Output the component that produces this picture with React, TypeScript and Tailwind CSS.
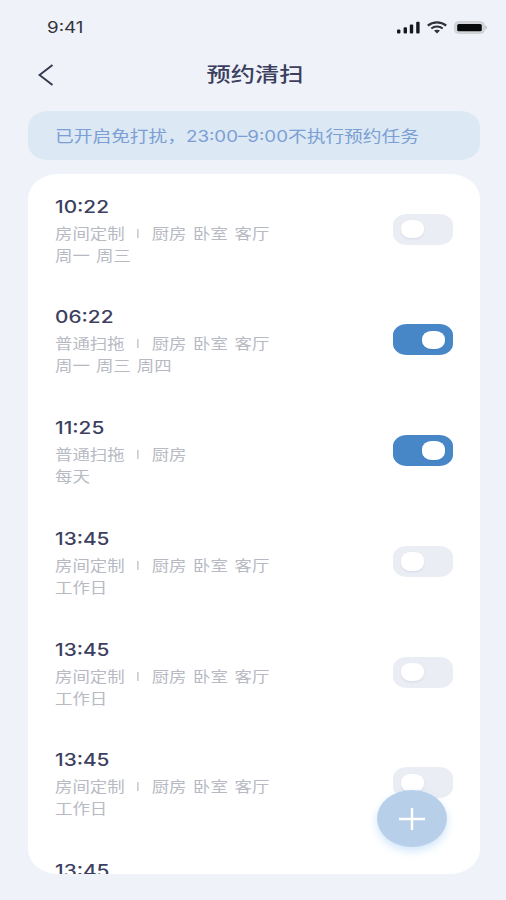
import { useState } from 'react'

type Schedule = {
  time: string
  mode: string
  rooms: string
  repeat: string
  enabled: boolean
}

const initialSchedules: Schedule[] = [
  { time: '10:22', mode: '房间定制', rooms: '厨房 卧室 客厅', repeat: '周一 周三', enabled: false },
  { time: '06:22', mode: '普通扫拖', rooms: '厨房 卧室 客厅', repeat: '周一 周三 周四', enabled: true },
  { time: '11:25', mode: '普通扫拖', rooms: '厨房', repeat: '每天', enabled: true },
  { time: '13:45', mode: '房间定制', rooms: '厨房 卧室 客厅', repeat: '工作日', enabled: false },
  { time: '13:45', mode: '房间定制', rooms: '厨房 卧室 客厅', repeat: '工作日', enabled: false },
  { time: '13:45', mode: '房间定制', rooms: '厨房 卧室 客厅', repeat: '工作日', enabled: false },
  { time: '13:45', mode: '房间定制', rooms: '厨房 卧室 客厅', repeat: '工作日', enabled: false }
]

function StatusBar() {
  return (
    <div className="flex h-[52px] items-center justify-between pl-[47px] pr-[18px] pt-0.5">
      <span className="origin-left scale-x-[1.21] pt-0.5 text-[15.5px] leading-none text-[#33353a]">
        9:41
      </span>
      <div className="flex items-center gap-[7px]">
        <svg width="24" height="13" viewBox="0 0 24 13" fill="#17181c">
          <rect x="1" y="8.5" width="3.4" height="4" rx="1" />
          <rect x="7.6" y="6.2" width="3.4" height="6.3" rx="1" />
          <rect x="13.8" y="3.5" width="3.4" height="9" rx="1" />
          <rect x="20.2" y="0.7" width="3.4" height="11.8" rx="1" />
        </svg>
        <svg width="20" height="13" viewBox="0 0 20 13" fill="none" stroke="#303238">
          <path d="M.8 4.6C6 .2 14 .2 19.2 4.6" strokeWidth="2.2" />
          <path d="M4.3 7.6c3.2-2.8 8.2-2.8 11.4 0" strokeWidth="2" />
          <path d="M7 9.6c1.8-1.3 4.2-1.3 6 0l-3 2.9z" fill="#303238" stroke="none" />
        </svg>
        <svg width="34" height="13" viewBox="0 0 34 13">
          <rect x="0.7" y="0.7" width="29.6" height="11.6" rx="3.6" fill="#d5d6da" stroke="#c9cbd0" />
          <rect x="3.2" y="2.9" width="24.6" height="7.4" rx="1.6" fill="#08090b" />
          <path d="M31.3 4.5c2.2.7 2.2 3.3 0 4z" fill="#b9bbc1" />
        </svg>
      </div>
    </div>
  )
}

function Toggle({ on, onClick }: { on: boolean; onClick: () => void }) {
  return (
    <button
      role="switch"
      aria-checked={on}
      onClick={onClick}
      className={`flex h-[31px] w-[60px] shrink-0 items-center rounded-[14px/11px] px-2 ${
        on ? 'justify-end bg-[#4787c8]' : 'justify-start bg-[#ebedf4]'
      }`}
    >
      <span className="h-[18.5px] w-[23px] rounded-[10px/8px] bg-white shadow-[0_1px_2px_rgba(60,80,120,0.12)]" />
    </button>
  )
}

function ScheduleRow({ item, onToggle }: { item: Schedule; onToggle: () => void }) {
  return (
    <li className="flex h-[110.8px] shrink-0 items-start justify-between px-[27px]">
      <div className="origin-left scale-x-[1.21] whitespace-nowrap pt-[22.5px]">
        <p className="text-[17.2px] font-medium leading-[20px] text-[#3d3f60]">{item.time}</p>
        <p className="mt-[5px] flex text-[14.4px] leading-[23px] text-[#b7bac3] [word-spacing:1.4px]">
          <span>{item.mode}</span>
          <span className="ml-[10px] mr-[11px] h-[9px] w-[1.3px] self-center bg-[#b7bac3]" />
          <span>{item.rooms}</span>
        </p>
        <p className="text-[14.4px] leading-[22px] text-[#b7bac3] [word-spacing:1px]">{item.repeat}</p>
      </div>
      <div className="pt-[39.5px]">
        <Toggle on={item.enabled} onClick={onToggle} />
      </div>
    </li>
  )
}

export default function App() {
  const [schedules, setSchedules] = useState(initialSchedules)

  const toggle = (index: number) => {
    setSchedules(schedules.map((s, i) => (i === index ? { ...s, enabled: !s.enabled } : s)))
  }

  return (
    <div className="relative flex h-[900px] w-[506px] flex-col overflow-hidden bg-[#eff3f9] font-['Inter','Noto_Sans_CJK_SC',sans-serif]">
      <StatusBar />

      <header className="grid h-[59px] grid-cols-[1fr_auto_1fr] items-center pb-[14px]">
        <button aria-label="返回" className="ml-[38px] w-4">
          <svg width="16" height="22" viewBox="0 0 16 22" fill="none" stroke="#36384f" strokeWidth="2">
            <path d="M14.5 1L1.5 11l13 10" />
          </svg>
        </button>
        <h1 className="ml-[3px] scale-x-[1.21] text-[20px] font-medium leading-none text-[#3d3f60]">预约清扫</h1>
      </header>

      <div className="ml-[28px] mr-[26px] flex h-[49px] shrink-0 items-center rounded-[20px/16px] bg-[#dce8f3] pl-[27px] pt-[3px]">
        <p className="origin-left scale-x-[1.216] whitespace-nowrap text-[15.4px] leading-none text-[#7b9fd5]">
          已开启免打扰，23:00–9:00不执行预约任务
        </p>
      </div>

      <ul className="ml-[28px] mr-[26px] mt-[13.5px] flex h-[700px] shrink-0 flex-col overflow-hidden rounded-[30px/25px] bg-white pt-[0.5px]">
        {schedules.map((item, i) => (
          <ScheduleRow key={i} item={item} onToggle={() => toggle(i)} />
        ))}
      </ul>

      <button
        aria-label="添加"
        className="absolute left-[377px] top-[790px] flex h-[57px] w-[70px] items-center justify-center rounded-[50%] bg-[#b7cfe9] shadow-[0_4px_9px_rgba(150,200,245,0.45)]"
      >
        <svg width="26" height="22" viewBox="0 0 26 22" stroke="#fff" strokeWidth="2.4">
          <path d="M0 11h26M13 0v22" />
        </svg>
      </button>
    </div>
  )
}
